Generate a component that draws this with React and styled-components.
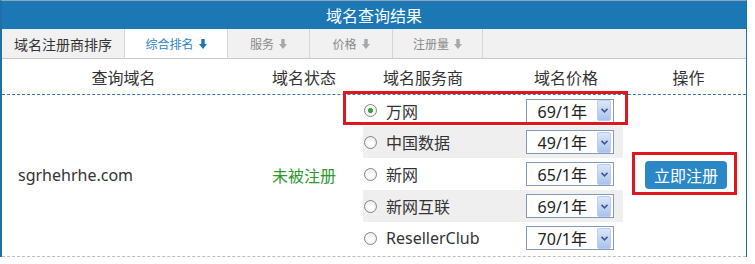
import React from "react";
import styled, { createGlobalStyle } from "styled-components";

const GlobalStyle = createGlobalStyle`
  body {
    margin: 0;
    background: #fff;
    font-family: "Noto Sans", "Noto Sans CJK SC", sans-serif;
    color: #333;
  }
`;

const tabs = [
  { label: "综合排名", active: true, width: 103 },
  { label: "服务", width: 82 },
  { label: "价格", width: 83 },
  { label: "注册量", width: 90 }
];

const providers = [
  { name: "万网", price: "69/1年", checked: true },
  { name: "中国数据", price: "49/1年", shaded: true },
  { name: "新网", price: "65/1年" },
  { name: "新网互联", price: "69/1年", shaded: true },
  { name: "ResellerClub", price: "70/1年" }
];

const DownArrow = ({ color }) => (
  <svg width="8" height="10" viewBox="0 0 8 10">
    <path d="M2.3 0h3.4v5h2.3L4 10 0 5h2.3z" fill={color} />
  </svg>
);

export default function App() {
  return (
    <>
      <GlobalStyle />
      <Panel>
        <Title>域名查询结果</Title>
        <TabBar>
          <SortLabel>域名注册商排序</SortLabel>
          {tabs.map(tab => (
            <Tab key={tab.label} active={tab.active} width={tab.width}>
              {tab.label}
              <DownArrow color={tab.active ? "#1c74b4" : "#a8a8a8"} />
            </Tab>
          ))}
        </TabBar>
        <HeaderRow>
          <HeadCell>查询域名</HeadCell>
          <HeadCell>域名状态</HeadCell>
          <HeadCell>域名服务商</HeadCell>
          <HeadCell>域名价格</HeadCell>
          <HeadCell last>操作</HeadCell>
        </HeaderRow>
        <Body>
          <Domain>sgrhehrhe.com</Domain>
          <Status>未被注册</Status>
          <ProviderList>
            {providers.map((p, i) => (
              <ProviderRow key={p.name} shaded={p.shaded} first={i === 0}>
                <Radio checked={p.checked} />
                <ProviderName>{p.name}</ProviderName>
                <PriceSelect>
                  <span>{p.price}</span>
                  <DropButton>
                    <svg width="7" height="5" viewBox="0 0 7 5">
                      <path d="M0.5 0.8L3.5 3.8L6.5 0.8" stroke="#3e5a8a" strokeWidth="1.6" fill="none" />
                    </svg>
                  </DropButton>
                </PriceSelect>
                {i === 0 && <HighlightRow />}
              </ProviderRow>
            ))}
          </ProviderList>
          <Action>
            <ButtonWrap>
              <RegisterButton>立即注册</RegisterButton>
              <HighlightButton />
            </ButtonWrap>
          </Action>
        </Body>
      </Panel>
    </>
  );
}

const Panel = styled.div`
  width: 744px;
  border-left: 2px solid #1f6fa8;
  border-right: 1px solid #1f6fa8;
  border-top: 1px solid #8fa6b8;
`;

const Title = styled.div`
  height: 28px;
  background: #1b78b4;
  color: #fff;
  font-size: 16px;
  display: flex;
  align-items: center;
  justify-content: center;
`;

const TabBar = styled.div`
  display: flex;
  height: 29px;
  background: #f1f1f1;
  border-bottom: 1px solid #c9c9c9;
`;

const SortLabel = styled.div`
  width: 122px;
  border-right: 1px solid #d6d6d6;
  display: flex;
  align-items: center;
  justify-content: center;
  font-size: 14px;
  color: #333;
`;

const Tab = styled.div`
  width: ${p => p.width - 1}px;
  border-right: 1px solid #d6d6d6;
  background: ${p => (p.active ? "#fff" : "transparent")};
  color: ${p => (p.active ? "#2a86c3" : "#8a8a8a")};
  font-size: 12px;
  display: flex;
  align-items: center;
  justify-content: center;
  gap: 5px;
`;

const HeaderRow = styled.div`
  display: grid;
  grid-template-columns: 243px 118px 120px 166px 1fr;
  height: 35px;
  align-items: center;
  border-bottom: 1px dashed #3d75a6;
`;

const HeadCell = styled.div`
  text-align: center;
  font-size: 16px;
  color: #333;
  padding-right: ${p => (p.last ? "18px" : "0")};
`;

const Body = styled.div`
  display: grid;
  grid-template-columns: 243px 118px 260px 1fr;
  align-items: center;
  padding-bottom: 2px;
  border-bottom: 1px dashed #bdbdbd;
`;

const Domain = styled.div`
  padding-left: 16px;
  font-size: 16px;
  color: #333;
`;

const Status = styled.div`
  text-align: center;
  font-size: 16px;
  color: #2d982d;
`;

const ProviderList = styled.div`
  display: flex;
  flex-direction: column;
`;

const ProviderRow = styled.div`
  position: relative;
  height: ${p => (p.first ? "31px" : "32px")};
  display: flex;
  align-items: center;
  padding: 0 9px 0 1px;
  background: ${p => (p.shaded ? "#efefef" : "transparent")};
`;

const Radio = styled.span`
  width: 11px;
  height: 11px;
  border-radius: 50%;
  border: 1px solid #858585;
  background: ${p =>
    p.checked
      ? "radial-gradient(circle, #3fa23f 0 2.2px, #f4f4f4 2.9px, #fff)"
      : "radial-gradient(circle at 50% 60%, #fff 0 2px, #e2e2e2)"};
  margin-right: 9px;
  flex-shrink: 0;
`;

const ProviderName = styled.span`
  font-size: 16px;
  color: #333;
`;

const PriceSelect = styled.div`
  margin-left: auto;
  width: 84px;
  height: 22px;
  border: 1px solid #7f9db9;
  background: #fff;
  display: flex;
  align-items: center;
  justify-content: flex-end;
  padding-right: 2px;
  font-size: 16px;
  color: #222;
`;

const DropButton = styled.span`
  width: 12px;
  height: 19px;
  margin-left: 10px;
  border: 1px solid #b9cdef;
  border-radius: 2px;
  background: linear-gradient(#dbe7fc, #a8c2ef);
  display: flex;
  align-items: center;
  justify-content: center;
`;

const HighlightRow = styled.span`
  position: absolute;
  top: -4px;
  bottom: 1px;
  left: -20px;
  right: -5px;
  border: 3px solid #df1520;
  pointer-events: none;
`;

const Action = styled.div`
  display: flex;
  justify-content: center;
  padding-left: 3px;
`;

const ButtonWrap = styled.div`
  position: relative;
`;

const RegisterButton = styled.button`
  width: 82px;
  height: 28px;
  border: none;
  border-radius: 4px;
  background: #2b87c6;
  color: #fff;
  font-family: "Noto Sans CJK SC", sans-serif;
  font-size: 16px;
  padding: 0;
  display: block;
`;

const HighlightButton = styled.span`
  position: absolute;
  top: -9px;
  bottom: -6px;
  left: -13px;
  right: -10px;
  border: 3px solid #df1520;
  pointer-events: none;
`;
